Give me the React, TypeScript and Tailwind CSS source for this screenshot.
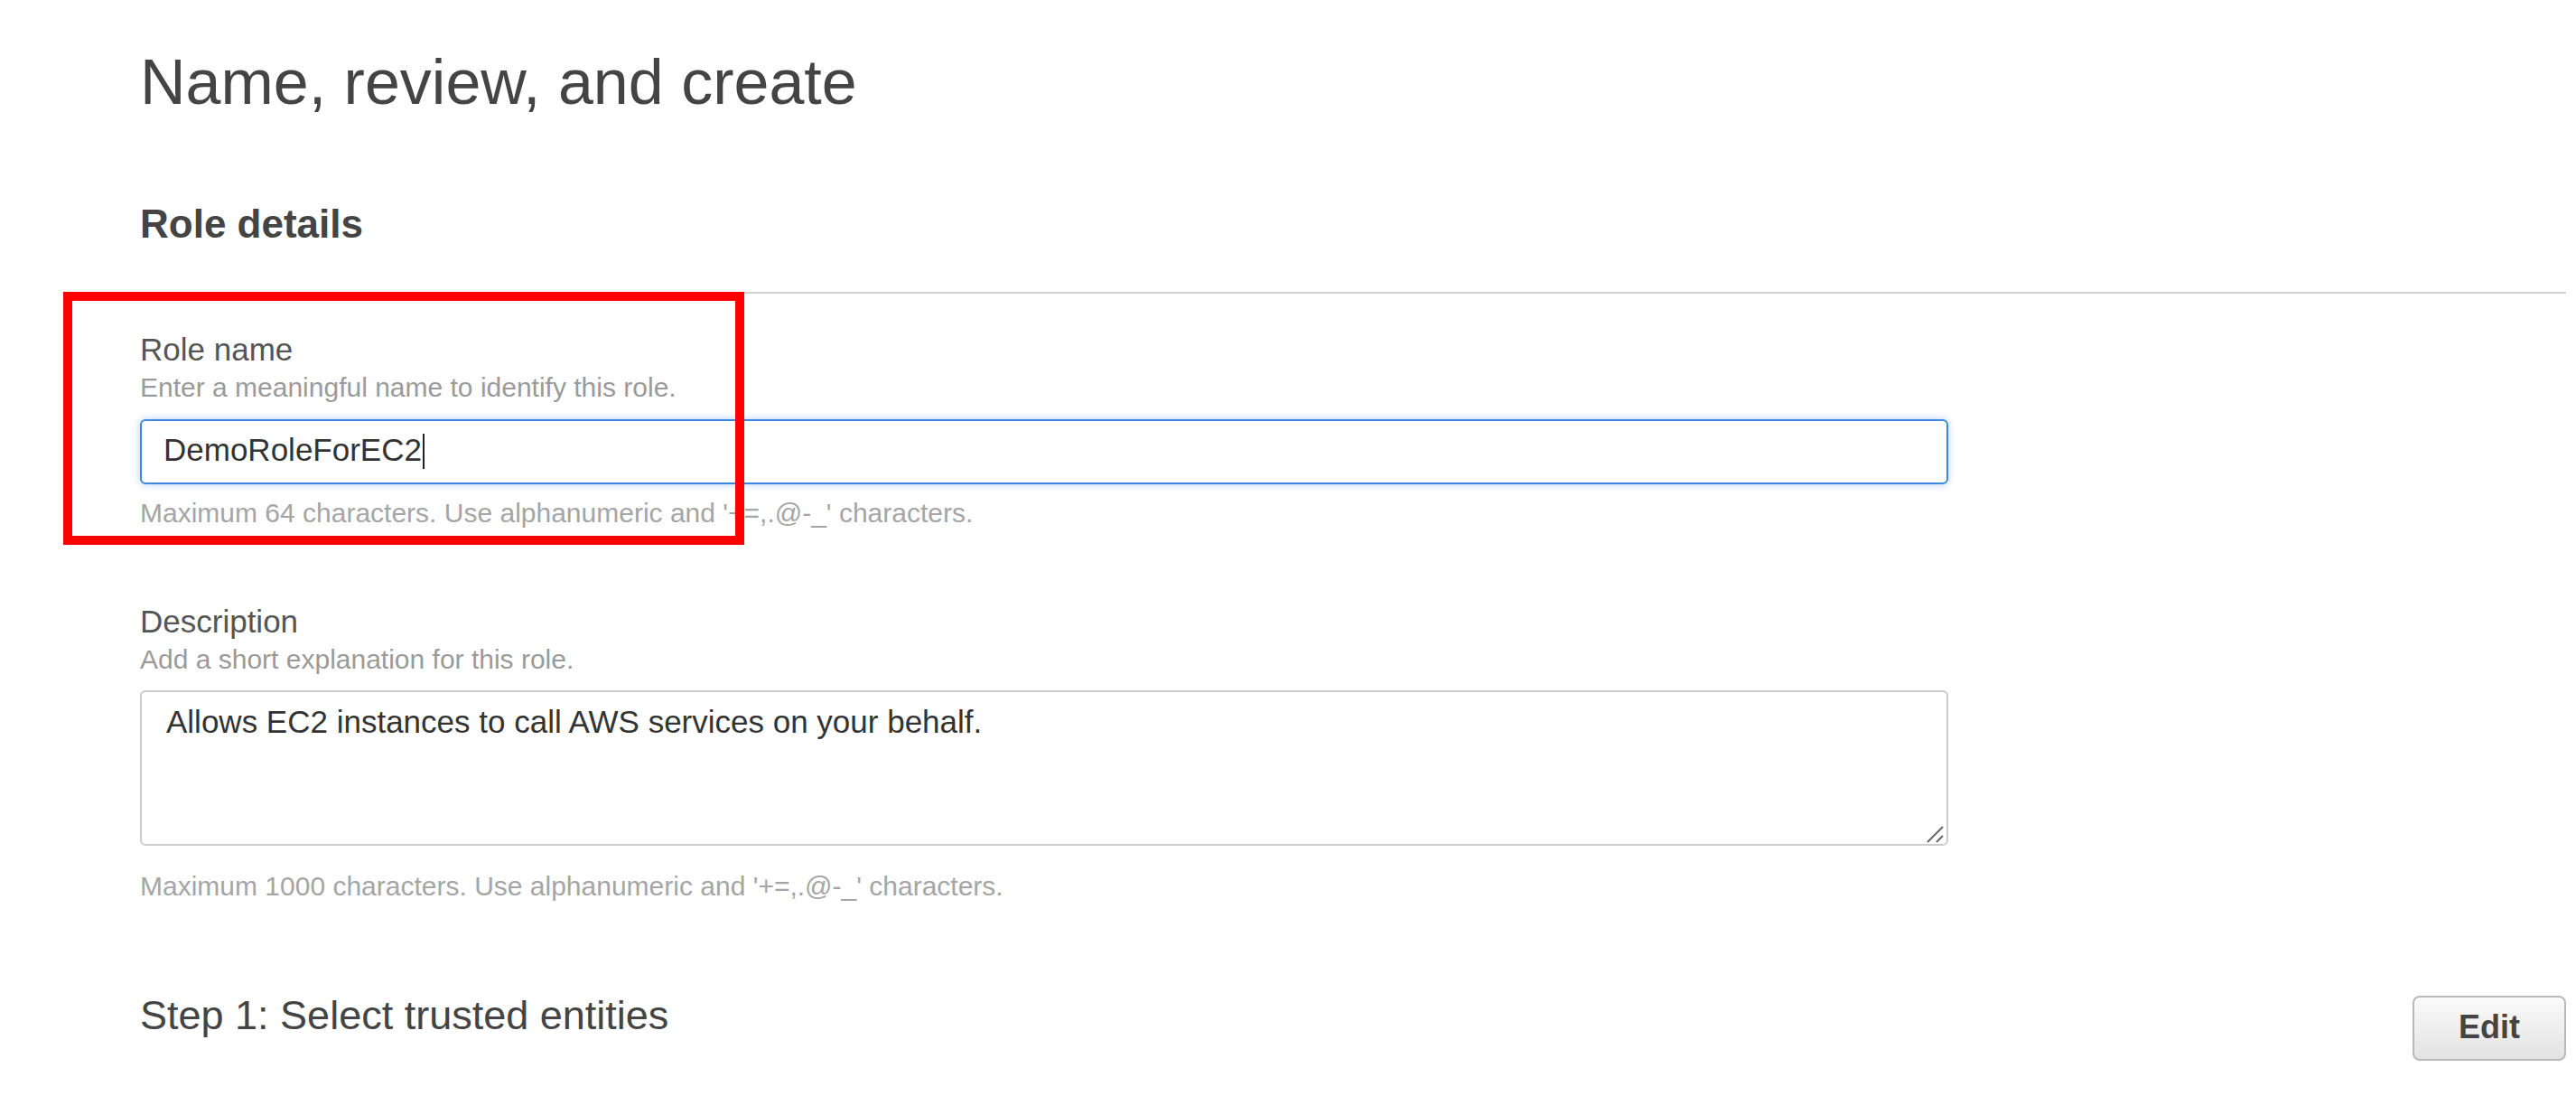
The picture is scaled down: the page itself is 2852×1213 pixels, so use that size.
import * as React from 'react';

const FieldLabel: React.FC<{ title: string; hint: string }> = ({ title, hint }) => (
    <>
        <div className="text-[35px] leading-[40px] text-[#555]">{title}</div>
        <div className="mt-[5px] text-[30px] leading-[34px] text-[#9a9a9a]">{hint}</div>
    </>
);

const App: React.FC = () => {
    const [description, setDescription] = React.useState('Allows EC2 instances to call AWS services on your behalf.');

    return (
        <div className="relative min-h-screen bg-white pl-[155px] pr-[11px] font-['Liberation_Sans',Arial,sans-serif]">
            <h1 className="pt-[51px] text-[70px] leading-[80px] text-[#444]">Name, review, and create</h1>
            <h2 className="mt-[91px] text-[44px] leading-[52px] font-bold text-[#444]">Role details</h2>

            <div className="mt-[49px] border-t-2 border-[#d0d0d0]">
                {/* Role name */}
                <div className="mt-[42px] w-[2002px]">
                    <FieldLabel title="Role name" hint="Enter a meaningful name to identify this role." />
                    <div className="mt-[18px] flex h-[72px] items-start rounded-[6px] border-2 border-[#3a89de] pl-[24px] pt-[12px] shadow-[0_0_10px_rgba(40,120,220,0.35)]">
                        <span className="text-[35px] leading-[40px] text-[#333]">DemoRoleForEC2</span>
                        <span className="ml-[1px] mt-[2px] h-[39px] w-[2px] bg-[#222]" />
                    </div>
                    <p className="mt-[15px] text-[30px] leading-[34px] text-[#a5a5a5]">
                        {"Maximum 64 characters. Use alphanumeric and '+=,.@-_' characters."}
                    </p>
                </div>

                {/* Description */}
                <div className="mt-[83px] w-[2002px]">
                    <FieldLabel title="Description" hint="Add a short explanation for this role." />
                    <div className="relative mt-[17px] h-[172px] w-[2002px]">
                        <textarea
                            className="block h-full w-full resize-none rounded-[6px] border-2 border-[#cccccc] px-[27px] py-[13px] text-[35px] leading-[40px] text-[#333] outline-none"
                            value={description}
                            onChange={(e) => setDescription(e.target.value)}
                            aria-label="Description"
                        />
                        {/* resize grip */}
                        <svg className="pointer-events-none absolute bottom-0 right-0" width="26" height="26" viewBox="0 0 26 26">
                            <path d="M3 22 L20 5 M13 22 L20 15" stroke="#666" strokeWidth="2" fill="none" />
                        </svg>
                    </div>
                    <p className="mt-[28px] text-[30px] leading-[34px] text-[#a5a5a5]">
                        {"Maximum 1000 characters. Use alphanumeric and '+=,.@-_' characters."}
                    </p>
                </div>

                {/* Step 1 */}
                <div className="mt-[100px] flex items-start justify-between">
                    <h3 className="text-[45px] leading-[52px] text-[#444]">Step 1: Select trusted entities</h3>
                    <button className="mt-[4px] flex h-[72px] w-[170px] items-center justify-center rounded-[8px] border-2 border-[#b9b9b9] bg-gradient-to-b from-[#fbfbfb] to-[#e2e2e2] pb-[3px] text-[36px] leading-[40px] font-bold text-[#444]">
                        Edit
                    </button>
                </div>
            </div>

            {/* annotation box */}
            <div className="pointer-events-none absolute left-[70px] top-[323px] h-[280px] w-[754px] border-[10px] border-[#ff0000]" />
        </div>
    );
};

export default App;
